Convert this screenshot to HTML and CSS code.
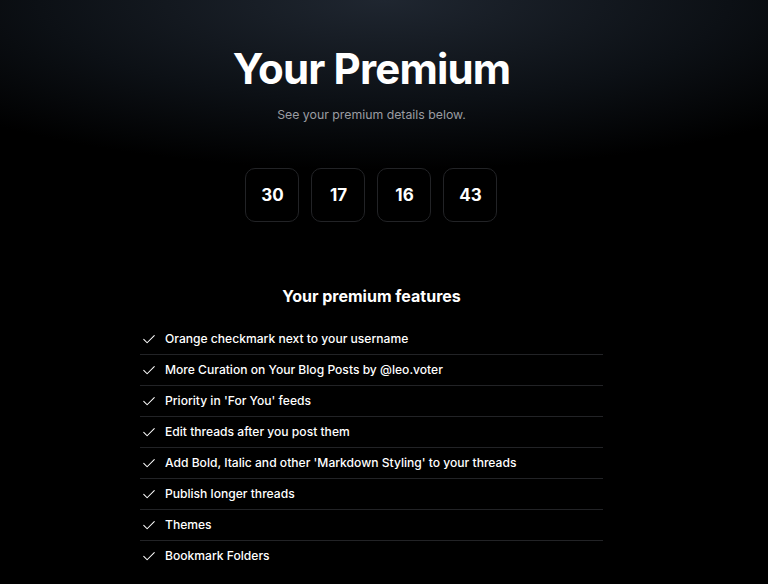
FILE: index.html
```html
<!DOCTYPE html>
<html lang="en">
<head>
<meta charset="utf-8">
<title>Your Premium</title>
<link rel="stylesheet" href="styles.css">
</head>
<body>
<main class="page">
  <section class="hero">
    <h1 class="title">Your Premium</h1>
    <p class="subtitle">See your premium details below.</p>
    <div class="countdown">
      <div class="count-box">30</div>
      <div class="count-box">17</div>
      <div class="count-box">16</div>
      <div class="count-box">43</div>
    </div>
  </section>
  <section class="features">
    <h2 class="features-title">Your premium features</h2>
    <ul class="feature-list">
      <li class="feature"><svg class="check" viewBox="0 0 24 24"><path d="M5 12.5l4.5 4.5L19 7.5"/></svg><span>Orange checkmark next to your username</span></li>
      <li class="feature"><svg class="check" viewBox="0 0 24 24"><path d="M5 12.5l4.5 4.5L19 7.5"/></svg><span>More Curation on Your Blog Posts by @leo.voter</span></li>
      <li class="feature"><svg class="check" viewBox="0 0 24 24"><path d="M5 12.5l4.5 4.5L19 7.5"/></svg><span>Priority in 'For You' feeds</span></li>
      <li class="feature"><svg class="check" viewBox="0 0 24 24"><path d="M5 12.5l4.5 4.5L19 7.5"/></svg><span>Edit threads after you post them</span></li>
      <li class="feature"><svg class="check" viewBox="0 0 24 24"><path d="M5 12.5l4.5 4.5L19 7.5"/></svg><span>Add Bold, Italic and other 'Markdown Styling' to your threads</span></li>
      <li class="feature"><svg class="check" viewBox="0 0 24 24"><path d="M5 12.5l4.5 4.5L19 7.5"/></svg><span>Publish longer threads</span></li>
      <li class="feature"><svg class="check" viewBox="0 0 24 24"><path d="M5 12.5l4.5 4.5L19 7.5"/></svg><span>Themes</span></li>
      <li class="feature"><svg class="check" viewBox="0 0 24 24"><path d="M5 12.5l4.5 4.5L19 7.5"/></svg><span>Bookmark Folders</span></li>
    </ul>
  </section>
</main>
</body>
</html>
```
FILE: styles.css
```css
html, body {
  margin: 0;
  padding: 0;
  background: #000;
  height: 100%;
  overflow: hidden;
}
body {
  font-family: Inter, "Noto Sans", sans-serif;
  color: #fff;
  background: radial-gradient(ellipse 75% 170px at 50% 0, #1f2630 0%, #0c1015 60%, #000 100%), #000;
  background-repeat: no-repeat;
}
.page {
  width: 743px;
  display: flex;
  flex-direction: column;
  align-items: center;
}
.hero {
  display: flex;
  flex-direction: column;
  align-items: center;
  padding-top: 44px;
}
.title {
  margin: 0;
  font-size: 42px;
  line-height: 50px;
  font-weight: 700;
  letter-spacing: -0.02em;
}
.subtitle {
  margin: 11px 0 0;
  font-size: 12.3px;
  line-height: 20px;
  color: #9a9ca1;
}
.countdown {
  display: flex;
  gap: 12px;
  margin-top: 43px;
}
.count-box {
  width: 52px;
  height: 52px;
  border: 1px solid #222326;
  border-radius: 10px;
  display: flex;
  align-items: center;
  justify-content: center;
  font-size: 17px;
  font-weight: 700;
  background: #000;
}
.features {
  display: flex;
  flex-direction: column;
  align-items: center;
  margin-top: 62px;
}
.features-title {
  margin: 0;
  font-size: 16px;
  line-height: 24px;
  font-weight: 700;
}
.feature-list {
  list-style: none;
  margin: 16px 0 0;
  padding: 0;
  width: 463px;
}
.feature {
  display: flex;
  align-items: center;
  gap: 7px;
  padding: 5px 0;
  line-height: 20px;
  font-size: 12.1px;
  font-weight: 500;
  border-bottom: 1px solid #222326;
}
.feature:last-child {
  border-bottom: none;
}
.check {
  width: 18px;
  height: 18px;
  fill: none;
  stroke: #fff;
  stroke-width: 1.4;
  stroke-linecap: round;
  stroke-linejoin: round;
  flex: none;
}
```
